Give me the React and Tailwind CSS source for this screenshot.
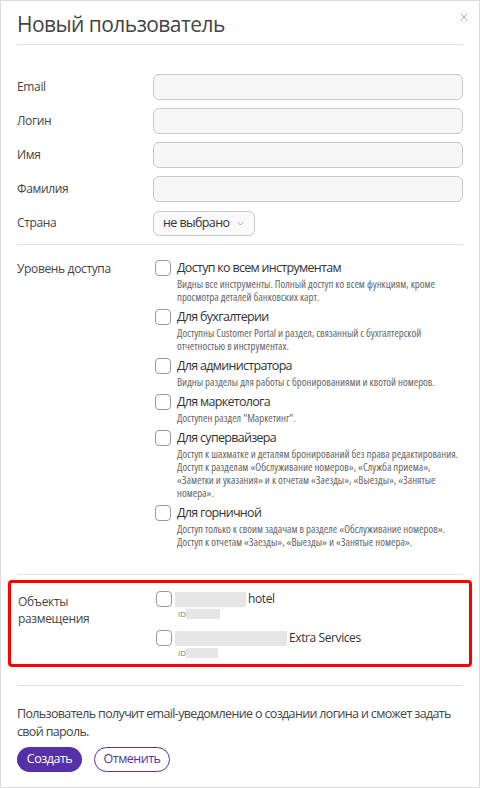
import React from "react";

const font = { fontFamily: '"Open Sans", "Noto Sans", sans-serif' };

function Box() {
  return <span className="block w-[16px] h-[16px] shrink-0 rounded-[4px] border border-[#9a9a9a] bg-white" />;
}

const roles = [
  ["Доступ ко всем инструментам", ["Видны все инструменты. Полный доступ ко всем функциям, кроме", "просмотра деталей банковских карт."]],
  ["Для бухгалтерии", ["Доступны Customer Portal и раздел, связанный с бухгалтерской", "отчетностью в инструментах."]],
  ["Для администратора", ["Видны разделы для работы с бронированиями и квотой номеров."]],
  ["Для маркетолога", ["Доступен раздел \"Маркетинг\"."]],
  ["Для супервайзера", ["Доступ к шахматке и деталям бронирований без права редактирования.", "Доступ к разделам «Обслуживание номеров», «Служба приема»,", "«Заметки и указания» и к отчетам «Заезды», «Выезды», «Занятые", "номера»."]],
  ["Для горничной", ["Доступ только к своим задачам в разделе «Обслуживание номеров».", "Доступ к отчетам «Заезды», «Выезды» и «Занятые номера»."]],
];

function Field({ label }) {
  return (
    <div className="flex items-center h-[34px]">
      <div className="w-[136px] shrink-0 text-[12px] tracking-[-0.35px] text-[#444]">{label}</div>
      <div className="flex-1 h-[26px] rounded-[6px] border border-[#c8c8c8] bg-[#f7f7f7]" />
    </div>
  );
}

export default function App() {
  return (
    <div style={font} className="w-[480px] h-[788px] bg-white border border-[#dcdcdc] relative overflow-hidden">
      <svg className="absolute right-[11px] top-[12px]" width="8" height="8" viewBox="0 0 8 8">
        <path d="M0.5 0.5 L7.5 7.5 M7.5 0.5 L0.5 7.5" stroke="#aaa" strokeWidth="1" />
      </svg>
      <div className="px-[16px]">
        <div className="pt-[8px] h-[44px] border-b border-[#e2e2e2] text-[21px] tracking-[-0.55px] leading-[30px] text-[#444]">Новый пользователь</div>
        <div className="pt-[25px] pb-[4px] border-b border-[#e2e2e2]">
          <Field label="Email" />
          <Field label="Логин" />
          <Field label="Имя" />
          <Field label="Фамилия" />
          <div className="flex items-center h-[34px]">
            <div className="w-[136px] shrink-0 text-[12px] tracking-[-0.35px] text-[#444]">Страна</div>
            <div className="h-[25px] w-[102px] rounded-[6px] border border-[#c8c8c8] bg-[#fafafa] flex items-center pl-[9px] text-[12.5px] tracking-[-0.6px] text-[#333]">
              не выбрано
              <svg className="ml-[8px]" width="7" height="5" viewBox="0 0 7 5"><path d="M0.5 1 L3.5 4 L6.5 1" fill="none" stroke="#aaa" strokeWidth="1" /></svg>
            </div>
          </div>
        </div>
        <div className="flex pt-[14px] pb-[26px] border-b border-[#e2e2e2]">
          <div className="w-[138px] shrink-0 text-[12px] tracking-[-0.35px] text-[#444] leading-[20px]">Уровень доступа</div>
          <div className="flex flex-col gap-[5px]">
            {roles.map(([t, d]) => (
              <div key={t} className="flex gap-[6px]">
                <div className="pt-[1px]"><Box /></div>
                <div>
                  <div className="text-[12.5px] tracking-[-0.7px] leading-[18px] text-[#333]">{t}</div>
                  <div className="text-[10.8px] leading-[13px] text-[#666] whitespace-nowrap [font-stretch:80%]">
                    {d.map((l) => <div key={l}>{l}</div>)}
                  </div>
                </div>
              </div>
            ))}
          </div>
        </div>
      </div>
      <div className="mx-[7px] mt-[5px] border-[3px] border-[#ff0000] rounded-[4px] flex px-[7px] pt-[8px] pb-[6px]">
        <div className="w-[138px] shrink-0 text-[12px] tracking-[-0.35px] text-[#444] leading-[17px] pt-[2px]">Объекты<br />размещения</div>
        <div className="flex flex-col gap-[11px]">
          <div className="flex gap-[3px]">
            <Box />
            <div>
              <div className="flex items-center text-[12px] tracking-[-0.4px] leading-[16px] text-[#333]">
                <span className="inline-block w-[71px] h-[15px] bg-[#e6e6e6] mr-[2px]" />hotel
              </div>
              <div className="flex items-center text-[8px] text-[#777] pl-[3px] h-[11px] mt-[1px]">ID<span className="inline-block w-[34px] h-[10px] bg-[#e6e6e6]" /></div>
            </div>
          </div>
          <div className="flex gap-[3px]">
            <Box />
            <div>
              <div className="flex items-center text-[12px] tracking-[-0.4px] leading-[16px] text-[#333]">
                <span className="inline-block w-[112px] h-[15px] bg-[#e6e6e6] mr-[2px]" />Extra Services
              </div>
              <div className="flex items-center text-[8px] text-[#777] pl-[3px] h-[11px] mt-[1px]">ID<span className="inline-block w-[32px] h-[10px] bg-[#e6e6e6]" /></div>
            </div>
          </div>
        </div>
      </div>
      <div className="px-[16px]">
        <div className="mt-[18px] border-t border-[#e2e2e2] pt-[19px] text-[12.5px] tracking-[-0.65px] leading-[18px] text-[#444]">
          Пользователь получит email-уведомление о создании логина и сможет задать свой пароль.
        </div>
        <div className="flex gap-[12px] mt-[6px]">
          <button className="h-[25px] w-[65px] flex items-center justify-center rounded-full bg-[#5530a8] text-white text-[12.5px] tracking-[-0.5px]">Создать</button>
          <button className="h-[25px] w-[76px] flex items-center justify-center rounded-full border border-[#5530a8] text-[#5530a8] text-[12.5px] tracking-[-0.5px] bg-white">Отменить</button>
        </div>
      </div>
    </div>
  );
}
